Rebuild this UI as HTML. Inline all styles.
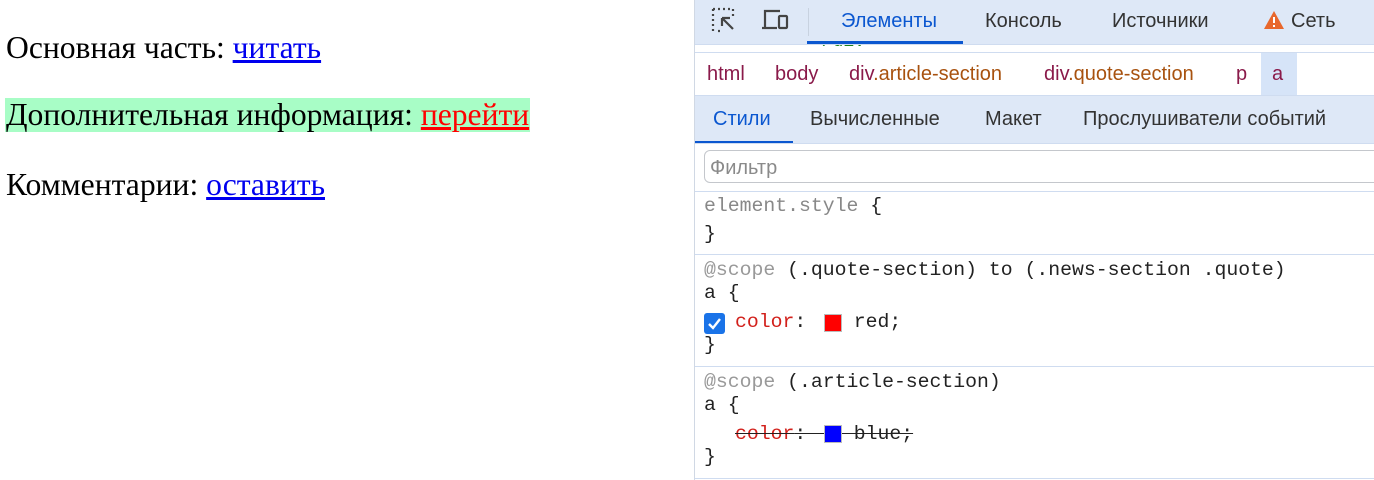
<!DOCTYPE html>
<html><head><meta charset="utf-8"><style>
body{margin:0;width:1374px;height:480px;overflow:hidden;background:#fff;position:relative;font-family:"Liberation Serif",serif}
.l{position:absolute;left:6px;font-size:31.6px;line-height:34px;white-space:nowrap}
.l a{color:#00e;text-decoration:underline}
.dt{position:absolute;left:694px;top:0;width:680px;height:480px;border-left:1px solid #d0d8e4;font-family:"Liberation Sans",sans-serif;background:#fff}
.ab{position:absolute;white-space:nowrap}
.mono{font-family:"Liberation Mono",monospace;font-size:19.8px;position:absolute;left:9px;white-space:nowrap;color:#222}
.hr{position:absolute;left:0;width:680px;height:1px;background:#cfdcf0}
</style></head><body>
<div class="l" style="top:31px">Основная часть: <a>читать</a></div>
<div class="l" style="top:98px;left:5px;background:#a8fdc6;padding-left:1px;padding-right:1px">Дополнительная информация: <a style="color:#f00">перейти</a></div>
<div class="l" style="top:168px">Комментарии: <a>оставить</a></div>

<div class="dt">
 <div style="position:absolute;top:0;left:0;width:680px;height:44px;background:#dee8f7"></div>
 <svg class="ab" style="left:16px;top:7px" width="28" height="28" viewBox="0 0 28 28" fill="none" stroke="#444" stroke-width="2.2"><path d="M2 2h2M7 2h2M12 2h2M17 2h2M2 2v2M2 7v2M2 12v2M2 17v2M2 22v2M7 24h2M22 2v2M22 7v2" /><path d="M11 11l11 11M11 11h8M11 11v8"/></svg>
 <svg class="ab" style="left:66px;top:8px" width="30" height="24" viewBox="0 0 30 24" fill="none" stroke="#444" stroke-width="2.2"><path d="M4 19V3h15"/><path d="M1 20h15"/><rect x="18" y="8" width="8" height="12" rx="1"/></svg>
 <div class="ab" style="left:113px;top:8px;width:1px;height:28px;background:#c8d2e0"></div>
 <div class="ab" style="left:146px;top:10px;font-size:20px;color:#0b57d0">Элементы</div>
 <div class="ab" style="left:112px;top:41px;width:156px;height:3px;background:#0b57d0"></div>
 <div class="ab" style="left:290px;top:10px;font-size:20px;color:#333">Консоль</div>
 <div class="ab" style="left:417px;top:10px;font-size:20px;color:#333">Источники</div>
 <svg class="ab" style="left:568px;top:10px" width="22" height="20" viewBox="0 0 22 20"><path d="M11 1L21 19H1Z" fill="#e8672c"/><path d="M11 7v6M11 15v2" stroke="#fff" stroke-width="2"/></svg>
 <div class="ab" style="left:596px;top:10px;font-size:20px;color:#333">Сеть</div>
 <div class="ab" style="left:116px;top:45px;height:7px;overflow:hidden"><div style="font-family:'Liberation Mono',monospace;font-size:18px;color:#1a7f1a;line-height:18px;margin-top:-12px">&lt;/div&gt;</div></div>
 <div class="hr" style="top:44px"></div>
 <div class="hr" style="top:52px"></div>
 <div class="ab" style="left:566px;top:53px;width:36px;height:42px;background:#d6e4f8"></div>
 <div class="ab" style="top:63px;left:12px;font-size:20px;color:#8a1a4a">html</div>
 <div class="ab" style="top:63px;left:80px;font-size:20px;color:#8a1a4a">body</div>
 <div class="ab" style="top:63px;left:154px;font-size:20px;color:#8a1a4a">div<span style="color:#a8520f">.article-section</span></div>
 <div class="ab" style="top:63px;left:349px;font-size:20px;color:#8a1a4a">div<span style="color:#a8520f">.quote-section</span></div>
 <div class="ab" style="top:63px;left:541px;font-size:20px;color:#8a1a4a">p</div>
 <div class="ab" style="top:63px;left:577px;font-size:20px;color:#8a1a4a">a</div>
 <div class="ab" style="top:95px;left:0;width:680px;height:48px;background:#dee8f7;border-top:1px solid #cfdcf0"></div>
 <div class="ab" style="top:108px;left:18px;font-size:20px;color:#0b57d0">Стили</div>
 <div class="ab" style="top:141px;left:0;width:98px;height:3px;background:#0b57d0"></div>
 <div class="ab" style="top:108px;left:115px;font-size:20px;color:#333">Вычисленные</div>
 <div class="ab" style="top:108px;left:290px;font-size:20px;color:#333">Макет</div>
 <div class="ab" style="top:108px;left:388px;font-size:20px;color:#333">Прослушиватели событий</div>
 <div class="hr" style="top:143px"></div>
 <div class="ab" style="top:150px;left:9px;width:680px;height:33px;border:1px solid #c4c7cc;border-radius:6px;box-sizing:border-box"></div>
 <div class="ab" style="top:157px;left:15px;font-size:20px;color:#8a8a8a">Фильтр</div>
 <div class="hr" style="top:191px"></div>
 <div class="mono" style="top:195px;color:#888">element.style <span style="color:#222">{</span></div>
 <div class="mono" style="top:223px">}</div>
 <div class="hr" style="top:254px"></div>
 <div class="mono" style="top:259px"><span style="color:#999">@scope</span> (.quote-section) to (.news-section .quote)</div>
 <div class="mono" style="top:282px">a {</div>
 <div class="ab" style="top:313px;left:9px;width:21px;height:21px;background:#1a73e8;border-radius:3px"></div>
 <svg class="ab" style="top:313px;left:9px" width="21" height="21"><path d="M5 11l4 4 7-9" stroke="#fff" stroke-width="2.4" fill="none"/></svg>
 <div class="mono" style="top:311px;left:40px"><span style="color:#d2201b">color</span>:&nbsp;&nbsp;&nbsp;&nbsp;red;</div>
 <div class="ab" style="top:314px;left:129px;width:16px;height:16px;background:#f00;border:1px solid #bbb"></div>
 <div class="mono" style="top:334px">}</div>
 <div class="hr" style="top:366px"></div>
 <div class="mono" style="top:371px"><span style="color:#999">@scope</span> (.article-section)</div>
 <div class="mono" style="top:394px">a {</div>
 <div class="mono" style="top:423px;left:40px;text-decoration:line-through"><span style="color:#d2201b">color</span>:&nbsp;&nbsp;&nbsp;&nbsp;blue;</div>
 <div class="ab" style="top:425px;left:129px;width:16px;height:16px;background:#00f;border:1px solid #bbb"></div>
 <div class="mono" style="top:446px">}</div>
 <div class="hr" style="top:478px"></div>
</div>
</body></html>
